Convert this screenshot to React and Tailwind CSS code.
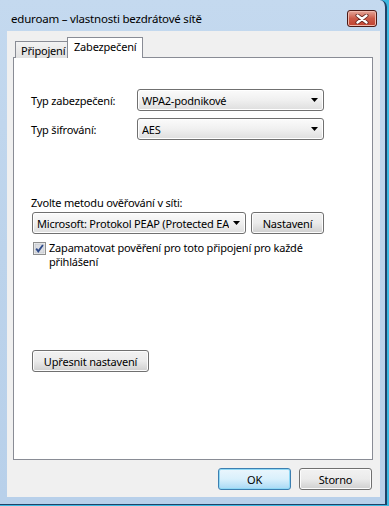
import React from 'react';

const font = { fontFamily: '"Noto Sans", "Open Sans", sans-serif', letterSpacing: '-0.2px' };

const btn =
  'rounded-[3px] border border-[#707070] bg-gradient-to-b from-[#f2f2f2] via-[#ebebeb] to-[#cfcfcf] shadow-[inset_0_0_0_1px_#fcfcfc] flex items-center justify-center text-[11px] leading-[15px] text-black';

const Arrow = () => (
  <svg width="7" height="4" viewBox="0 0 7 4" className="shrink-0">
    <polygon points="0,0 7,0 3.5,4" fill="#000" />
  </svg>
);

const Combo = ({ value, className = '' }) => (
  <div
    className={`h-[22px] rounded-[3px] border border-[#707070] bg-gradient-to-b from-[#fbfbfb] via-[#f0f0f0] to-[#dedede] shadow-[inset_0_0_0_1px_#ffffff] flex items-center pl-[4px] pr-[5px] text-[11px] leading-[15px] text-black ${className}`}
  >
    <span className="flex-1 overflow-hidden whitespace-nowrap mr-[4px]">{value}</span>
    <Arrow />
  </div>
);

const CheckBox = () => (
  <svg width="13" height="13" viewBox="0 0 13 13" className="shrink-0">
    <rect x="0.5" y="0.5" width="12" height="12" fill="#f4f4f4" stroke="#8e8f8f" />
    <rect x="2" y="2" width="9" height="9" fill="#dcdee3" stroke="#b8bcc4" strokeWidth="0.6" />
    <path d="M3.2 6.6 L5.3 9.4 L9.9 3" fill="none" stroke="#2f4b8a" strokeWidth="1.8" />
  </svg>
);

const CloseIcon = () => (
  <svg width="14" height="10" viewBox="0 0 14 10">
    <path d="M2.5 1.5 L11.5 8.5 M11.5 1.5 L2.5 8.5" stroke="#5a1f1a" strokeWidth="4" strokeLinecap="round" />
    <path d="M2.5 1.5 L11.5 8.5 M11.5 1.5 L2.5 8.5" stroke="#ffffff" strokeWidth="2.4" strokeLinecap="round" />
  </svg>
);

export default function App() {
  return (
    <div className="w-[389px] h-[506px] bg-[#3cb9e2] overflow-hidden" style={font}>
      <div className="w-[387px] h-[505px] rounded-tr-[7px] border-r-2 border-b border-[#1f4368] bg-gradient-to-b from-[#c4d9ef] via-[#bcd3eb] to-[#b8d0ea] flex flex-col">
        {/* Title bar */}
        <div className="h-[31px] flex items-start shrink-0">
          <span className="pl-[11px] pt-[11px] text-[11.5px] leading-[15px] text-black whitespace-nowrap">
            eduroam – vlastnosti bezdrátové sítě
          </span>
          <div className="ml-auto mr-[8px] mt-[10px] w-[30px] h-[17px] rounded-[3px] border border-[#4a1a16] bg-gradient-to-b from-[#e4a79b] via-[#cb5a48] to-[#c0412f] shadow-[inset_0_0_0_1px_#f0b8ac] flex items-center justify-center">
            <CloseIcon />
          </div>
        </div>

        {/* Client area */}
        <div className="ml-[7px] mr-[5px] mb-[7px] flex-1 bg-[#f0f0f0] flex flex-col">
          {/* Tabs */}
          <div className="pt-[6px] pl-[8px] flex items-end relative z-10 -mb-px">
            <div className="w-[53px] h-[17px] border border-b-0 border-[#898c95] bg-gradient-to-b from-[#f3f3f3] to-[#e1e1e1] text-[11px] leading-[15px] pl-[5px] pt-[1px] text-black whitespace-nowrap">
              Připojení
            </div>
            <div className="-ml-px w-[76px] h-[21px] border border-b-0 border-[#898c95] bg-white text-[11px] leading-[15px] pl-[6px] pt-[1px] text-black whitespace-nowrap">
              Zabezpečení
            </div>
          </div>

          {/* Panel */}
          <div className="ml-[6px] w-[360px] h-[403px] border border-[#898c95] bg-white flex flex-col pl-[17px] text-[11px] leading-[15px] text-black">
            <div className="mt-[31px] flex items-center">
              <span className="w-[106px]">Typ zabezpečení:</span>
              <Combo value="WPA2-podnikové" className="w-[187px]" />
            </div>
            <div className="mt-[7px] flex items-center">
              <span className="w-[106px]">Typ šifrování:</span>
              <Combo value="AES" className="w-[187px]" />
            </div>

            <div className="mt-[55px]">Zvolte metodu ověřování v síti:</div>
            <div className="mt-[2px] ml-[1px] flex items-center gap-[5px]">
              <Combo value="Microsoft: Protokol PEAP (Protected EAP)" className="w-[214px]" />
              <div className={`${btn} w-[73px] h-[22px]`}>Nastavení</div>
            </div>

            <div className="mt-[8px] ml-[2px] flex items-start gap-[3px]">
              <CheckBox />
              <div className="-mt-px leading-[14px]">
                Zapamatovat pověření pro toto připojení pro každé
                <br />
                přihlášení
              </div>
            </div>

            <div className={`${btn} mt-[81px] ml-[1px] w-[117px] h-[22px]`}>Upřesnit nastavení</div>
          </div>

          {/* Bottom buttons */}
          <div className="mt-[8px] pr-[8px] flex justify-end gap-[8px]">
            <div className="w-[73px] h-[22px] rounded-[3px] border border-[#3c7fb1] bg-gradient-to-b from-[#eaf6fd] via-[#d9f0fc] to-[#a7d9f5] shadow-[inset_0_0_0_1px_#8fd8f5] flex items-center justify-center text-[11px] leading-[15px] text-black">
              OK
            </div>
            <div className={`${btn} w-[73px] h-[22px]`}>Storno</div>
          </div>
        </div>
      </div>
    </div>
  );
}
